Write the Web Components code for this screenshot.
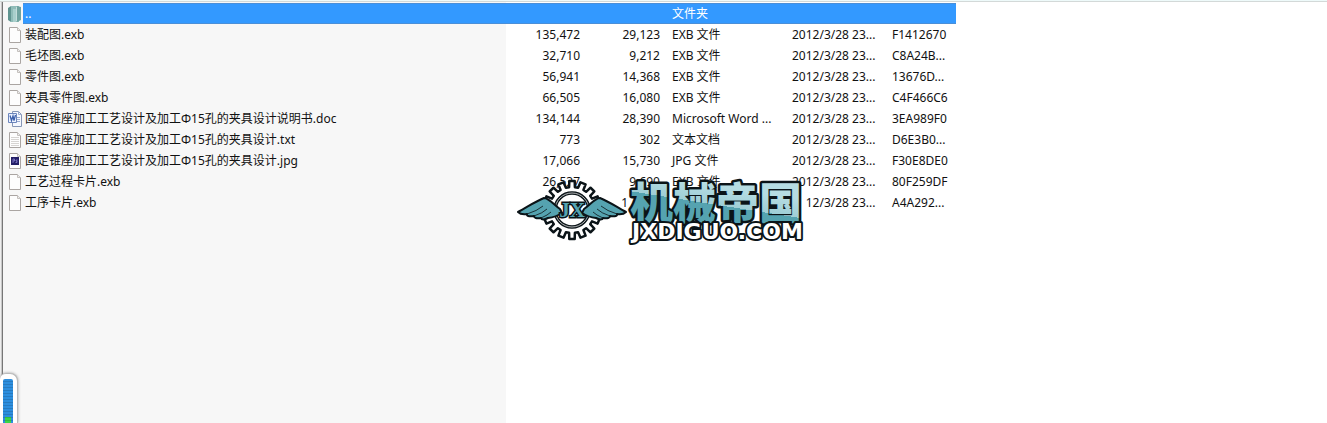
<!DOCTYPE html>
<html lang="zh-CN">
<head>
<meta charset="utf-8">
<title>压缩文件列表</title>
<style>
  html, body { margin: 0; height: 100%; }
  body { font: 12px/20px "Noto Sans", "Noto Sans CJK SC", sans-serif; color: #111; background: #fff; overflow: hidden; }
</style>
</head>
<body>
<archive-window>
  <file-list></file-list>
  <brand-mark slot="overlay"></brand-mark>
  <level-meter slot="overlay"></level-meter>
</archive-window>
<script>
class ArchiveWindow extends HTMLElement {
  constructor() {
    super();
    this.attachShadow({ mode: 'open' }).innerHTML = `
      <style>
        :host { display: flex; flex-direction: column; height: 100vh; position: relative; overflow: hidden; }
        .top { flex: none; height: 2px; box-sizing: border-box; background: #eefafa; border-bottom: 1px solid #d3d9d8; }
        .body { flex: 1; display: flex; min-height: 0; }
        .edge { flex: none; width: 4px; background: linear-gradient(90deg, #eee 0 1px, #c8c8c8 1px 2px, #777 2px 3px, #f7f7f7 3px); }
        main { flex: 1; min-width: 0; padding-top: 1px; background: linear-gradient(90deg, #f7f7f7 502px, #fff 502px); }
      </style>
      <div class="top"></div>
      <div class="body"><div class="edge"></div><main><slot></slot></main></div>
      <slot name="overlay"></slot>`;
  }
}

class FileIcon extends HTMLElement {
  connectedCallback() {
    const page = '<path d="M1.500 .5h8l3 3v12h-11z" fill="#fdfdfd" stroke="#aaa5a2"/><path d="M9.500 .5v3h3" fill="#eee" stroke="#c4c0bd"/>';
    const art = {
      folder: '<path d="M0 2l3-2v16l-3-2z" fill="#5f9490"/><path d="M3 0h8v16H3z" fill="#8fbcb8"/><path d="M5 3h3v13H5z" fill="#a9cfcc"/><path d="M9 0l4 1v13l-4 2z" fill="#6fa39f"/><path d="M8.500 1v14" stroke="#c4dddb"/>',
      page,
      text: page + '<path d="M3 5.500h8M3 7.500h8M3 9.500h8M3 11.500h8M3 13.500h8" stroke="#d6d4d2"/>',
      word: '<path d="M4.500 .5h6l3 3v12h-9z" fill="#f5f8ff" stroke="#8797b6"/><path d="M10.500 .5v3h3M9 6.500h3M9 8.500h3M9 10.500h3" fill="none" stroke="#9bacd0"/><path d="M.5 2.500h8v9h-8z" fill="#edf3ff" stroke="#6c86bd"/><path d="M2 4.500l1.500 5L5 5l1 4.500L7.500 4" fill="none" stroke="#3c60ac" stroke-width="1.300"/>',
      image: page + '<path d="M3 4h8v8H3z" fill="#231e66"/><path d="M5 10V6h1.500v2H5M9.500 7H8v1h1v1.500H7.500" fill="none" stroke="#8981cf" stroke-width=".8"/>'
    };
    this.attachShadow({ mode: 'open' }).innerHTML = `
      <style>:host { display: block; flex: none; width: 14px; height: 16px; } svg { display: block; }</style>
      <svg width="14" height="16" viewBox="0 0 14 16" aria-hidden="true">${art[this.getAttribute('kind')]}</svg>`;
  }
}

class FileList extends HTMLElement {
  constructor() {
    super();
    const date = '2012/3/28 23...';
    const rows = [
      ['folder', '..', '', '', '文件夹', '', ''],
      ['page', '装配图.exb', '135,472', '29,123', 'EXB 文件', date, 'F1412670'],
      ['page', '毛坯图.exb', '32,710', '9,212', 'EXB 文件', date, 'C8A24B...'],
      ['page', '零件图.exb', '56,941', '14,368', 'EXB 文件', date, '13676D...'],
      ['page', '夹具零件图.exb', '66,505', '16,080', 'EXB 文件', date, 'C4F466C6'],
      ['word', '固定锥座加工工艺设计及加工Φ15孔的夹具设计说明书.doc', '134,144', '28,390', 'Microsoft Word ...', date, '3EA989F0'],
      ['text', '固定锥座加工工艺设计及加工Φ15孔的夹具设计.txt', '773', '302', '文本文档', date, 'D6E3B0...'],
      ['image', '固定锥座加工工艺设计及加工Φ15孔的夹具设计.jpg', '17,066', '15,730', 'JPG 文件', date, 'F30E8DE0'],
      ['page', '工艺过程卡片.exb', '26,537', '9,690', 'EXB 文件', date, '80F259DF'],
      ['page', '工序卡片.exb', '', '1<i></i>', '', date, 'A4A292...']
    ];
    this.attachShadow({ mode: 'open' }).innerHTML = `
      <style>
        :host { display: block; }
        table { width: 952px; table-layout: fixed; border-collapse: collapse; }
        td { height: 21px; padding: 0 6px; white-space: nowrap; line-height: 20px; }
        td.name { padding: 0; }
        .file { display: flex; align-items: center; padding-left: 4px; }
        .file span { flex: 1; height: 21px; line-height: 22px; margin-left: 1px; padding-left: 2px; }
        .num { text-align: right; }
        .num i { display: inline-block; width: 32px; }
        .selected { color: #fff; }
        .selected td:not(.name), .selected span { background: #39f; box-shadow: inset 0 1px #4a8fd8, inset 0 -1px #4a8fd8; }
      </style>
      <table aria-label="文件">
        <colgroup><col style="width:502px"><col style="width:80px"><col style="width:80px"><col style="width:120px"><col style="width:100px"><col style="width:70px"></colgroup>
        <tbody>${rows.map(([kind, name, size, packed, type, time, crc], i) => `
          <tr${i ? '' : ' class="selected"'}><td class="name"><div class="file"><file-icon kind="${kind}"></file-icon><span>${name}</span></div></td><td class="num">${size}</td><td class="num">${packed}</td><td>${type}</td><td>${time}</td><td>${crc}</td></tr>`).join('')}
        </tbody>
      </table>`;
  }
}

class BrandMark extends HTMLElement {
  constructor() {
    super();
    const teeth = [];
    const n = 16;
    for (let i = 0; i < n; i++) {
      for (const [t, r] of [[-.32, 23], [-.24, 29], [.24, 29], [.32, 23]]) {
        const a = (i + t) * 2 * Math.PI / n;
        teeth.push((56 + r * Math.sin(a)).toFixed(1) + ',' + (32 - r * Math.cos(a)).toFixed(1));
      }
    }
    const wing = `<path d="M44 31C38 27 33 20 28 20C18 24 10 30 2 34Q5 37 11 36Q10 39 18 38Q18 41 25 40Q26 43 32 40Q40 39 46 35Z" fill="#55a3b0" stroke="#0b1418" stroke-width="2" stroke-linejoin="round"/>
      <path d="M11 36Q21 33 27 28M18 38Q27 35 31 31M25 40Q32 37 35 34" fill="none" stroke="#0b1418" stroke-width=".8"/>`;
    this.attachShadow({ mode: 'open' }).innerHTML = `
      <style>
        :host { display: block; position: absolute; left: 516px; top: 178px; }
        svg { display: block; overflow: visible; }
        .cn { font: 900 43px "Noto Sans CJK SC", sans-serif; }
        .en { font: 700 22px "DejaVu Sans", sans-serif; }
        .jx { font: 700 21px "Liberation Serif", serif; }
      </style>
      <svg width="294" height="66" viewBox="0 0 294 66" role="img" aria-label="机械帝国 JXDIGUO.COM">
        <defs><linearGradient id="shine" gradientUnits="userSpaceOnUse" x1="200" y1="8" x2="194" y2="46">
          <stop offset="0" stop-color="#b5dce2"/><stop offset=".48" stop-color="#9fced6"/><stop offset=".48" stop-color="#55a3b0"/><stop offset="1" stop-color="#55a3b0"/>
        </linearGradient></defs>
        <path d="M114 8H290V62H112V43Z" fill="#fff"/>
        <polygon points="${teeth.join(' ')}" fill="#fff" stroke="#0b1418" stroke-width="2.500" stroke-linejoin="round"/>
        <circle cx="56" cy="32" r="17" fill="#fff" stroke="#0b1418" stroke-width="3.500"/>
        <circle cx="56" cy="32" r="17" fill="none" stroke="#fff" stroke-width=".7"/>
        ${wing}<g transform="translate(112 0) scale(-1 1)">${wing}</g>
        <text class="jx" x="56" y="39" text-anchor="middle" fill="#55a3b0" stroke="#0b1418" stroke-width="3" paint-order="stroke">JX</text>
        <text class="cn" x="114" y="41" fill="url(#shine)" stroke="#0b1418" stroke-width="5" stroke-linejoin="round" paint-order="stroke">机械帝国</text>
        <text class="en" x="116" y="61" fill="#fff" stroke="#0b1418" stroke-width="4" stroke-linejoin="round" paint-order="stroke">JXDIGUO.COM</text>
      </svg>`;
  }
}

class LevelMeter extends HTMLElement {
  constructor() {
    super();
    this.attachShadow({ mode: 'open' }).innerHTML = `
      <style>
        :host { display: block; box-sizing: border-box; position: absolute; left: 0; bottom: 0; width: 18px; height: 50px; padding: 5px 4px 0 3px; background: #fff; border: 1px solid #bbb; border-width: 1px 1px 0 0; border-radius: 6px 8px 0 0; box-shadow: 0 0 3px #999; }
        div { height: 100%; border-radius: 2px 2px 0 0; background: repeating-linear-gradient(transparent 0 2px, #0002 2px 3px), linear-gradient(90deg, #2c8ede 2px, transparent 2px 8px, #2c8ede 8px), linear-gradient(#2c8ede 38px, #3bd54a 38px); }
      </style>
      <div></div>`;
  }
}

customElements.define('file-icon', FileIcon);
customElements.define('file-list', FileList);
customElements.define('brand-mark', BrandMark);
customElements.define('level-meter', LevelMeter);
customElements.define('archive-window', ArchiveWindow);
</script>
</body>
</html>
